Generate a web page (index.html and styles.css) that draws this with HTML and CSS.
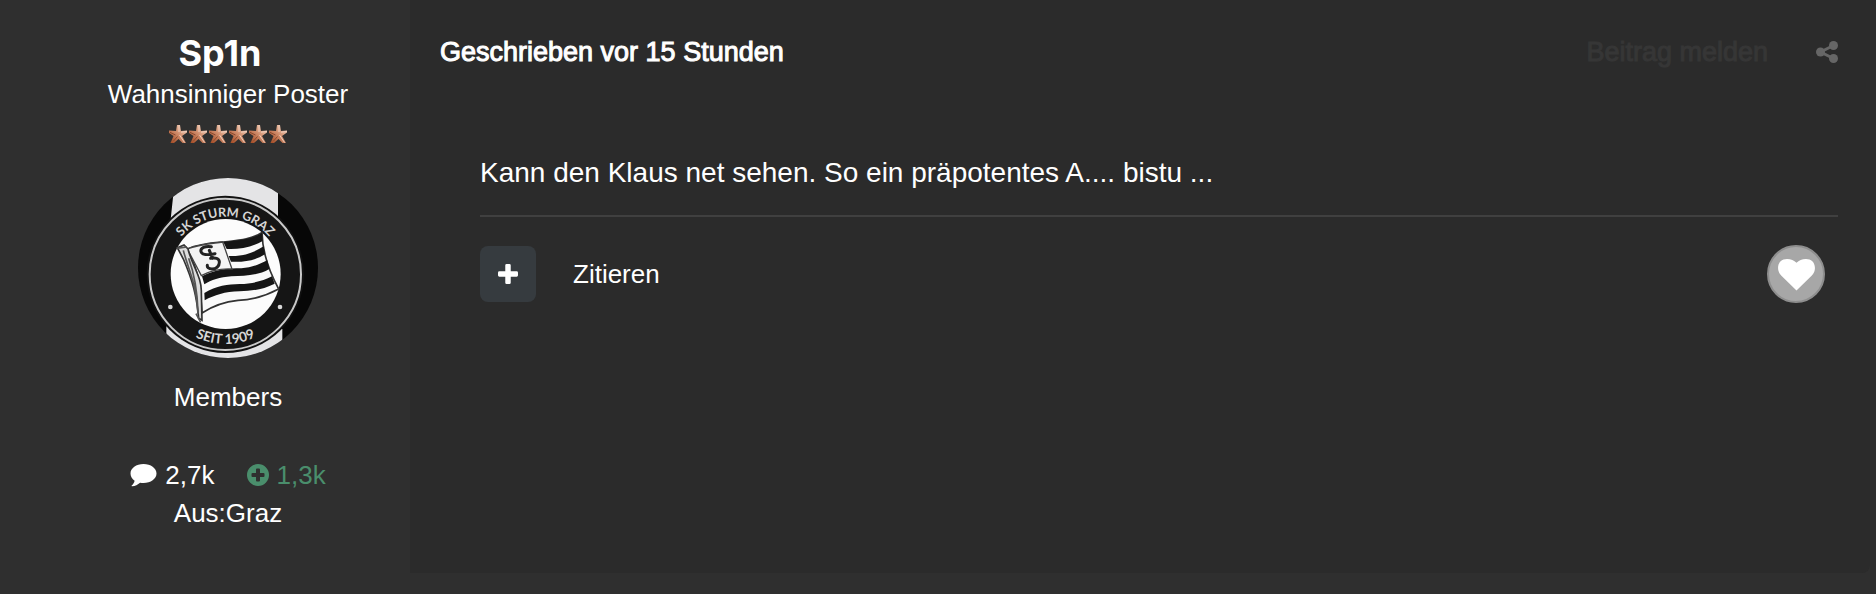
FILE: index.html
```html
<!DOCTYPE html>
<html lang="de">
<head>
<meta charset="utf-8">
<meta name="viewport" content="width=device-width, initial-scale=1">
<title>Beitrag von Sp1n</title>
<link rel="stylesheet" href="styles.css">
</head>
<body>
<svg class="defs" aria-hidden="true">
  <defs>
    <linearGradient id="bronze" x1="1" y1="0" x2="0" y2="1">
      <stop offset="0.1" stop-color="#f0cdb8"/>
      <stop offset="0.5" stop-color="#cf8a68"/>
      <stop offset="0.9" stop-color="#a8512b"/>
    </linearGradient>
    <symbol id="star" viewBox="0 0 18 18">
      <path fill="url(#bronze)" d="M8 0h3l1 6 6-.5v2L13 11l4 7h-3.500L9.500 14 5 18H1.500l3-7L0 8V5.500l7 .5z"/>
      <path fill="none" stroke="#efcdbc" stroke-width="1" d="M10 0v7M10.500 10l5 7.500M12 7.200l6-.7"/>
      <path fill="none" stroke="#8a4a30" stroke-width="1" d="M1 7.300l5.500 2.700M4.500 16l4-4.500"/>
    </symbol>
  </defs>
</svg>
<article class="post">
  <aside class="author">
    <h3 class="author-name">Sp1n</h3>
    <p class="line">Wahnsinniger Poster</p>
    <div class="stars" role="img" aria-label="6 Sterne">
      <svg><use href="#star"/></svg><svg><use href="#star"/></svg><svg><use href="#star"/></svg><svg><use href="#star"/></svg><svg><use href="#star"/></svg><svg><use href="#star"/></svg>
    </div>
    <svg class="avatar" viewBox="30 27 540 540" role="img" aria-label="SK Sturm Graz">
      <defs>
        <path id="arc-top" d="M119 316a173 173 0 0 1 346 0"/>
        <path id="arc-bottom" d="M83 316a209 209 0 0 0 418 0"/>
        <clipPath id="disc"><circle cx="300" cy="297" r="270"/></clipPath>
      </defs>
      <g clip-path="url(#disc)">
        <path fill="#070707" d="M30 27h540v540H30z"/>
        <path fill="#e4e4e6" d="M142 20h308v140H127zM115 472l348 8v100H115z"/>
        <circle cx="292" cy="316" r="236" fill="#111"/>
        <circle cx="292" cy="316" r="227" fill="#151515" stroke="#c9c9c9" stroke-width="6"/>
        <circle cx="293" cy="315" r="165" fill="#fcfcfc"/>
        <circle cx="127" cy="414" r="7" fill="#d8d8d8"/>
        <circle cx="456" cy="414" r="7" fill="#d8d8d8"/>
        <path fill="#fafafa" stroke="#333" stroke-width="5" stroke-linejoin="round" d="M178 240C215 224 250 222 286 219C330 214 370 212 402 190C403 250 425 310 452 360C405 385 370 393 330 394C290 398 252 412 222 432C218 380 218 340 200 290z"/>
        <path fill="#151515" d="M286 219C330 214 370 212 402 192L404 216C370 236 330 242 296 240zM302 261C340 263 375 253 407 232L411 256C380 276 345 280 309 278zM222 322C265 300 300 298 340 298C370 296 395 286 418 274L424 300C390 320 350 320 310 322C275 325 250 333 229 346zM229 372C265 350 300 346 335 345C375 344 405 336 432 322L440 344C405 362 370 366 335 367C290 368 260 378 230 394z"/>
        <path fill="#f4f4f4" stroke="#444" stroke-width="4" d="M178 240C212 226 250 224 284 219L312 300C280 298 245 306 220 320z"/>
        <path fill="none" stroke="#222" stroke-width="9" stroke-linecap="round" d="M250 233c-18-3-34 4-31 15s22 10 42 6M248 268c14-3 25 0 26 10c1 14-10 22-22 22c-10 0-15-5-14-11M244 244l10 24"/>
        <path fill="#ddd" stroke="#333" stroke-width="5" d="M148 236l20-8 12 12c12 50 42 85 40 130l2 84-10-6C206 380 194 335 166 270z"/>
        <path fill="none" stroke="#555" stroke-width="5" d="M166 244c14 56 40 100 44 190M182 268c16 44 26 100 28 160M146 238l30-4M204 434l14 26"/>
        <text class="crest-text"><textPath href="#arc-top" startOffset="50%">SK STURM GRAZ</textPath></text>
        <text class="crest-text crest-year"><textPath href="#arc-bottom" startOffset="50%">SEIT 1909</textPath></text>
      </g>
    </svg>
    <p class="line">Members</p>
    <div class="stats">
      <span class="stat">
        <svg class="icon-comment" viewBox="0 0 27 24" aria-hidden="true"><path fill="currentColor" d="M13.500 1C20.700 1 26.500 5.200 26.500 10.500S20.700 20 13.500 20c-1.200 0-2.300-.1-3.400-.3C7.800 21.700 5.200 23 2.200 23.300c-.6 0-.8-.6-.3-1 1.300-1.300 2.300-2.500 2.700-4.600C2 16 .5 13.400.5 10.500.5 5.200 6.300 1 13.500 1z"/></svg>
        2,7k
      </span>
      <span class="stat stat-green">
        <svg class="icon-plus" viewBox="0 0 22 22" aria-hidden="true"><path fill="currentColor" fill-rule="evenodd" d="M11 0a11 11 0 1 1 0 22a11 11 0 0 1 0-22zM10 4.500a1 1 0 0 0-1 1V9H5.500a1 1 0 0 0-1 1v2a1 1 0 0 0 1 1H9v3.500a1 1 0 0 0 1 1h2a1 1 0 0 0 1-1V13h3.500a1 1 0 0 0 1-1v-2a1 1 0 0 0-1-1H13V5.500a1 1 0 0 0-1-1z"/></svg>
        1,3k
      </span>
    </div>
    <p class="line">Aus:Graz</p>
  </aside>
  <section class="panel">
    <header class="panel-head">
      <a class="posted" href="#post">Geschrieben vor 15 Stunden</a>
      <a class="report" href="#report">Beitrag melden</a>
      <a class="share" href="#share" aria-label="Teilen">
        <svg viewBox="0 0 22 22" aria-hidden="true"><path fill="none" stroke="currentColor" stroke-width="3" d="M17.500 4.500L4.500 11l13 6.500"/><g fill="currentColor"><circle cx="17.500" cy="4.500" r="4.500"/><circle cx="4.500" cy="11" r="4.500"/><circle cx="17.500" cy="17.500" r="4.500"/></g></svg>
      </a>
    </header>
    <div class="panel-body">
      <p class="message">Kann den Klaus net sehen. So ein präpotentes A.... bistu ...</p>
      <footer class="actions">
        <button class="multiquote" type="button" aria-label="Mehrfach zitieren">
          <svg viewBox="0 0 22 22" aria-hidden="true"><path fill="currentColor" d="M9.500 0h3A1.500 1.500 0 0 1 14 1.500V8h6.500A1.500 1.500 0 0 1 22 9.500v3a1.500 1.500 0 0 1-1.500 1.500H14v6.500a1.500 1.500 0 0 1-1.500 1.500h-3A1.500 1.500 0 0 1 8 20.500V14H1.500A1.500 1.500 0 0 1 0 12.500v-3A1.500 1.500 0 0 1 1.500 8H8V1.500A1.500 1.500 0 0 1 9.500 0z"/></svg>
        </button>
        <a class="quote" href="#quote">Zitieren</a>
        <button class="like" type="button" aria-label="Gefällt mir">
          <svg viewBox="0 0 38 34" aria-hidden="true"><path fill="currentColor" d="M19 33.500L3.200 18C1 15.700 0 13 0 10.300 0 4.300 4 1 9.300 1c4 0 7.200 1.600 9.700 4 2.500-2.400 5.700-4 9.700-4C34 1 38 4.300 38 10.300c0 2.700-1 5.400-3.200 7.700z"/></svg>
        </button>
      </footer>
    </div>
  </section>
</article>
</body>
</html>
```
FILE: styles.css
```css
* {
  box-sizing: border-box;
}

body {
  margin: 0;
  background: #2f2f2f;
  color: #fff;
  font-family: "Liberation Sans", Arial, sans-serif;
  font-size: 26px;
  line-height: 38px;
}

p,
h3 {
  margin: 0;
}

a {
  color: inherit;
  text-decoration: none;
}

button {
  display: grid;
  place-items: center;
  padding: 0;
  color: #fff;
  cursor: pointer;
}

svg {
  display: block;
}

.defs {
  position: absolute;
  width: 0;
  height: 0;
}

.post {
  display: grid;
  grid-template-columns: 410px 1fr;
  min-height: 100vh;
  padding: 0 6px 21px 0;
}

.author {
  display: flex;
  flex-direction: column;
  align-items: center;
  padding: 32px 0 0 46px;
}

.author-name {
  padding-right: 16px;
  font: 700 36px/43px Inter, sans-serif;
}

.stars {
  display: flex;
  gap: 2px;
  margin: 12px 0 35px;
}

.stars svg {
  width: 18px;
  height: 18px;
}

.avatar {
  width: 180px;
  height: 180px;
  margin-bottom: 20px;
}

.crest-text {
  fill: #d6d6d6;
  font: 700 38px Lato, sans-serif;
  text-anchor: middle;
}

.crest-year {
  font-size: 41px;
}

.stats {
  display: flex;
  gap: 32px;
  margin-top: 40px;
}

.stat {
  display: flex;
  align-items: center;
  gap: 8px;
}

.stat-green {
  color: #4a8e6c;
}

.icon-comment {
  width: 27px;
  height: 24px;
}

.icon-plus {
  width: 22px;
  height: 22px;
}

.panel {
  padding: 33px 32px 0 30px;
  background: #2b2b2b;
  border-radius: 0 0 8px 0;
}

.panel-head {
  display: flex;
  align-items: center;
}

.posted,
.report {
  font-size: 27px;
  -webkit-text-stroke: 1px;
}

.report {
  margin-left: auto;
  color: #363636;
}

.share {
  margin-left: 48px;
  color: #666;
}

.share svg {
  width: 22px;
  height: 22px;
}

.panel-body {
  padding: 81px 0 0 40px;
}

.message {
  padding-bottom: 21px;
  border-bottom: 2px solid #404040;
  font-size: 28px;
  line-height: 42px;
}

.actions {
  display: flex;
  align-items: center;
  padding: 28px 13px 0 0;
}

.multiquote {
  width: 56px;
  height: 56px;
  border: 0;
  border-radius: 8px;
  background: #363b3f;
}

.multiquote svg {
  width: 20px;
  height: 20px;
}

.quote {
  margin-left: 37px;
}

.like {
  width: 58px;
  height: 58px;
  margin-left: auto;
  border: 2px solid #8e8e8e;
  border-radius: 50%;
  background: #a7a7a7;
}

.like svg {
  width: 37px;
  height: 33px;
}
```
